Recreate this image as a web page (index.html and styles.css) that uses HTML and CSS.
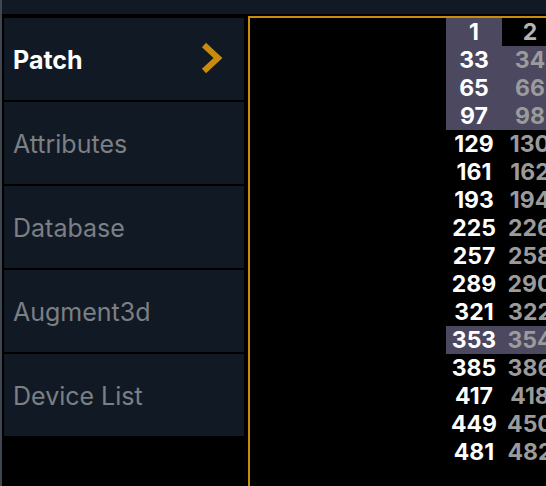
FILE: index.html
```html
<!DOCTYPE html>
<html lang="en">
<head>
  <meta charset="UTF-8" />
  <title>Patch</title>
  <link rel="stylesheet" href="styles.css">
</head>
<body>
  <div class="app">
    <div class="topbar"></div>
    <div class="main">
      <div class="sidebar">
        <div class="tile active">
          <span>Patch</span>
          <svg class="chevron" width="22" height="34" viewBox="0 0 22 34">
            <polyline points="3,4 17,17 3,30" fill="none" stroke="#c98b0b" stroke-width="6" stroke-linejoin="miter" />
          </svg>
        </div>
        <div class="tile"><span>Attributes</span></div>
        <div class="tile"><span>Database</span></div>
        <div class="tile"><span>Augment3d</span></div>
        <div class="tile"><span>Device List</span></div>
      </div>
      <div class="panel">
        <div class="grid">
          <div class="cell sel">1</div><div class="cell first">2</div>
          <div class="cell sel">33</div><div class="cell sel">34</div>
          <div class="cell sel">65</div><div class="cell sel">66</div>
          <div class="cell sel">97</div><div class="cell sel">98</div>
          <div class="cell">129</div><div class="cell">130</div>
          <div class="cell">161</div><div class="cell">162</div>
          <div class="cell">193</div><div class="cell">194</div>
          <div class="cell">225</div><div class="cell">226</div>
          <div class="cell">257</div><div class="cell">258</div>
          <div class="cell">289</div><div class="cell">290</div>
          <div class="cell">321</div><div class="cell">322</div>
          <div class="cell sel">353</div><div class="cell sel">354</div>
          <div class="cell">385</div><div class="cell">386</div>
          <div class="cell">417</div><div class="cell">418</div>
          <div class="cell">449</div><div class="cell">450</div>
          <div class="cell">481</div><div class="cell">482</div>
        </div>
      </div>
    </div>
  </div>
</body>
</html>
```

FILE: styles.css
```css
html, body {
  margin: 0;
  height: 100%;
  background: #000;
  overflow: hidden;
}

body {
  font-family: Inter, "Noto Sans", sans-serif;
}

.app {
  height: 100%;
  border-left: 2px solid #3d4651;
  display: flex;
  flex-direction: column;
}

.topbar {
  height: 14px;
  background: #111a24;
  flex-shrink: 0;
}

.main {
  flex: 1;
  display: flex;
  padding-top: 2px;
  min-height: 0;
}

.sidebar {
  width: 240px;
  padding: 2px 4px 0 2px;
  display: flex;
  flex-direction: column;
  gap: 2px;
  flex-shrink: 0;
}

.tile {
  height: 82px;
  background: #111a24;
  display: flex;
  align-items: center;
  justify-content: space-between;
  padding: 2px 21px 0 9px;
  box-sizing: border-box;
  font-size: 25px;
  color: #7c7f84;
}

.tile.active {
  color: #fff;
  font-weight: 700;
}

.chevron {
  display: block;
  margin-top: -4px;
}

.panel {
  flex: 1;
  border-top: 2px solid #c98b0b;
  border-left: 2px solid #c98b0b;
  overflow: hidden;
}

.grid {
  margin-left: 196px;
  display: grid;
  grid-template-columns: 56px 56px;
  grid-auto-rows: 28px;
}

.cell {
  display: flex;
  align-items: center;
  justify-content: center;
  font-size: 23px;
  font-weight: 700;
  color: #fff;
}

.cell:nth-child(even) {
  color: #9b9b9b;
}

.cell.first {
  color: #b4b4b4;
}

.sel {
  background: #4c4860;
}
```
